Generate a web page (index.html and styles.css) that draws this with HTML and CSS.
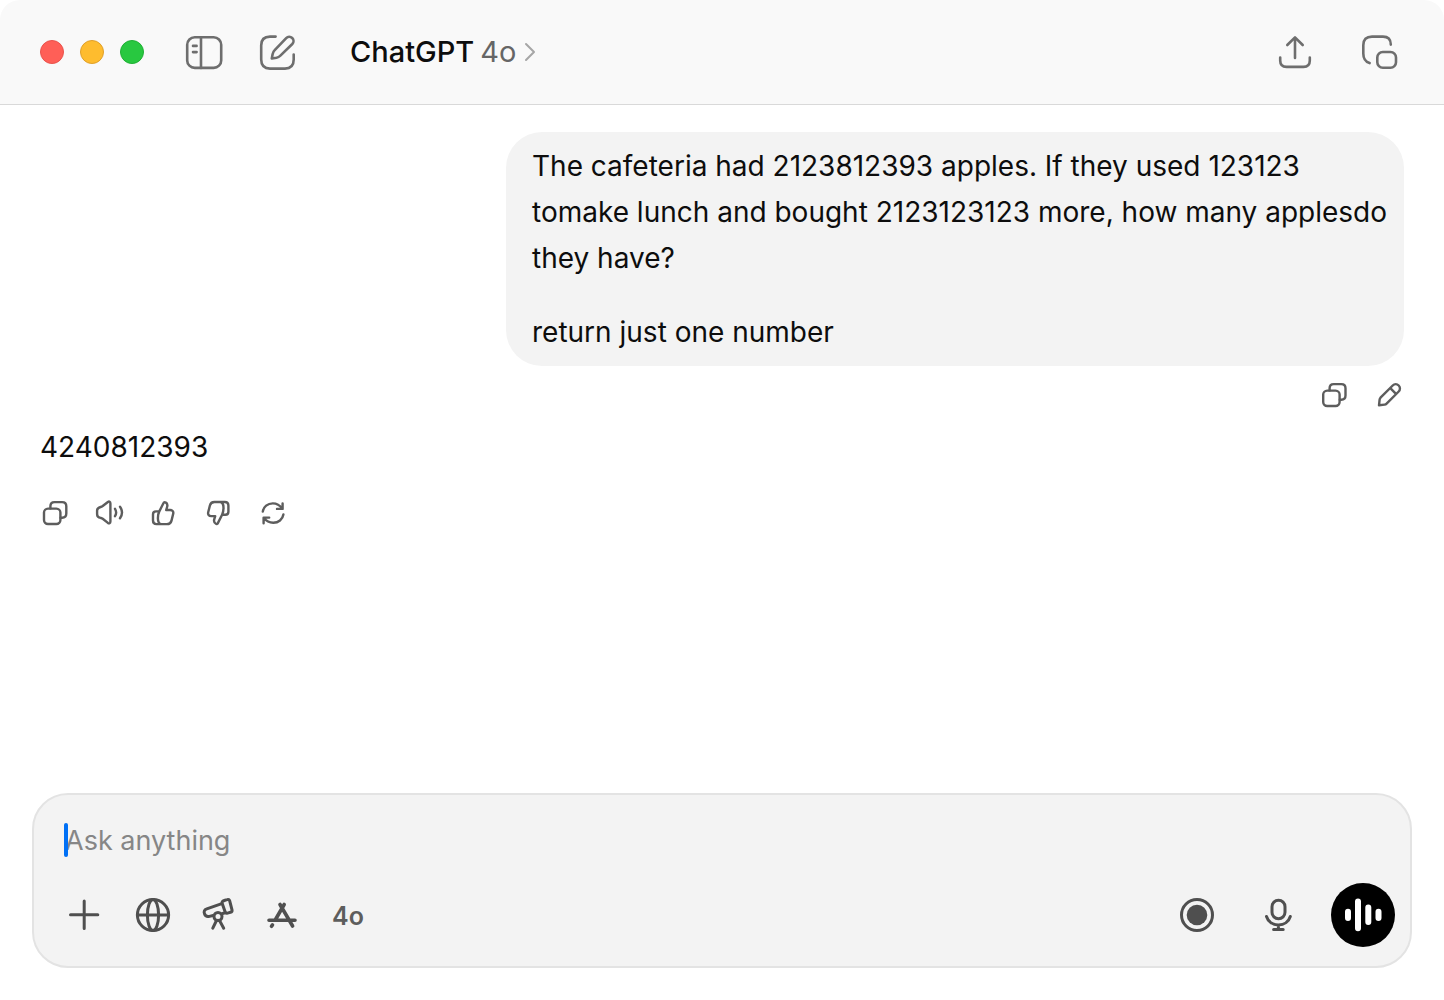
FILE: index.html
```html
<!DOCTYPE html>
<html lang="en">
<head>
<meta charset="utf-8">
<meta name="viewport" content="width=device-width, initial-scale=1">
<title>ChatGPT</title>
<link rel="stylesheet" href="styles.css">
</head>
<body>
<div class="window">
  <header class="titlebar">
    <div class="lights">
      <button class="light light-close" aria-label="Close"></button>
      <button class="light light-min" aria-label="Minimize"></button>
      <button class="light light-max" aria-label="Zoom"></button>
    </div>
    <div class="nav">
      <button class="icon-btn" aria-label="Toggle sidebar">
        <svg class="icon-lg" viewBox="0 0 40 40"><rect x="3.200" y="5.300" width="34" height="30.600" rx="7.500"/><path d="M17 5.500V36M9 13.900h3.600M9 20.100h3.600"/></svg>
      </button>
      <button class="icon-btn" aria-label="New chat">
        <svg class="icon-lg" viewBox="0 0 40 40"><path d="M17.600 4.600H12C6 4.600 3.200 7.500 3.200 13.400V27.600C3.200 33.700 6 36.600 12 36.600H27C33 36.600 35.700 33.700 35.700 27.600V22.500"/><path d="M13.800 26.500L14.600 22.200C14.900 20.600 15.600 19.300 16.700 18.200L28.200 6.100A4.200 4.200 0 0 1 34.300 12L22.400 23.600C21.300 24.700 20 25.400 18.500 25.700Z"/></svg>
      </button>
    </div>
    <button class="model"><span class="model-name">ChatGPT</span><span class="model-version">4o</span>
      <svg class="chevron" viewBox="0 0 12 20"><path d="M2 2l8 8-8 8"/></svg>
    </button>
    <div class="tools">
      <button class="icon-btn" aria-label="Share">
        <svg class="icon-lg" viewBox="0 0 40 40"><path d="M20 26V5.500M12.300 13L20 5.300 27.700 13M5.200 25.500V28.500C5.200 33 7.500 34.900 11.500 34.900H28.500C32.500 34.900 34.800 33 34.800 28.500V25.500"/></svg>
      </button>
      <button class="icon-btn" aria-label="Open companion window">
        <svg class="icon-lg" viewBox="0 0 40 40"><path d="M30.800 12.600C30.800 7 28 4.600 23 4.600H12C6.200 4.600 3.300 7.500 3.300 13.300V21.500C3.300 27 5.500 29.800 9.600 31.100"/><rect x="17.300" y="20" width="18.700" height="15.700" rx="5.500"/></svg>
      </button>
    </div>
  </header>

  <main class="chat">
    <section class="turn turn-user">
      <div class="bubble">
        <p>The cafeteria had 2123812393 apples. If they used 123123 tomake lunch and bought 2123123123 more, how many applesdo they have?</p>
        <p>return just one number</p>
      </div>
      <div class="actions">
        <button class="icon-btn" aria-label="Copy message">
          <svg class="icon-sm" viewBox="0 0 28 28"><rect x="2.200" y="9.600" width="16.400" height="15.400" rx="4"/><path d="M8.600 9.400V7.200C8.600 4.200 9.900 3.100 12.700 3.100H20.300C23.200 3.100 24.500 4.300 24.500 7.200V14.600C24.500 17.600 23.200 18.800 20.300 18.800H18.800"/></svg>
        </button>
        <button class="icon-btn" aria-label="Edit message">
          <svg class="icon-sm" viewBox="0 0 28 28"><path d="M3 24.300L3.600 18.700C3.700 17.900 4 17.300 4.500 16.700L16.700 4.500A4.200 4.200 0 0 1 22.700 10.500L10.600 22.600C10.100 23.100 9.400 23.500 8.600 23.600ZM14.300 7.200L20 12.900"/></svg>
        </button>
      </div>
    </section>
    <section class="turn">
      <p class="answer">4240812393</p>
      <div class="actions actions-answer">
        <button class="icon-btn" aria-label="Copy">
          <svg class="icon-sm" viewBox="0 0 28 28"><rect x="4" y="9.600" width="16.400" height="15.400" rx="4"/><path d="M10.400 9.400V7.200C10.400 4.200 11.700 3.100 14.500 3.100H22.100C25 3.100 26.300 4.300 26.300 7.200V14.600C26.300 17.600 25 18.800 22.100 18.800H20.600"/></svg>
        </button>
        <button class="icon-btn" aria-label="Read aloud">
          <svg class="icon-sm" viewBox="0 0 28 28"><path d="M15.400 4.500V22.600C15.400 24.400 14.200 24.800 12.900 23.900L7.700 19.700C7 19.200 6.400 19.100 5.600 18.900C3 18.500 2.100 17.200 2.100 15.200V11.500C2.100 9.500 3.200 8.700 5.600 8C6.400 7.800 7 7.500 7.700 7L12.900 3C14.200 2.100 15.400 2.700 15.400 4.500ZM20 9.800C21.400 12 21.400 14.900 20 17.200M25 7.700C27.600 11.400 27.600 15.500 25 19.300"/></svg>
        </button>
        <button class="icon-btn" aria-label="Good response">
          <svg class="icon-sm" viewBox="0 0 28 28"><path d="M9.300 12.400L13.400 4.200C13.800 3.300 14.700 2.900 15.500 3.400C17.300 4.300 17.700 6 17.100 8L16.200 11H20.200C22.600 11 23.700 12.700 23.200 14.800L21.500 21.600C20.900 24 19.500 25.100 17 25.100H6.500C4.200 25.100 3 23.900 3 21.600V15.400C3 13.300 4 12.400 6 12.400H9.300C8.100 14.700 7.900 17.200 7.900 19.200C7.900 22.100 8.600 25.100 11.600 25.100"/></svg>
        </button>
        <button class="icon-btn" aria-label="Bad response">
          <svg class="icon-sm" viewBox="0 0 28 28"><path d="M17.100 15.700L13 23.900C12.600 24.800 11.700 25.200 10.900 24.700C9.100 23.800 8.700 22.100 9.300 20.100L10.200 17.100H6.200C3.800 17.100 2.700 15.400 3.200 13.300L4.900 6.500C5.500 4.100 6.900 3 9.400 3H19.900C22.200 3 23.400 4.200 23.400 6.500V12.700C23.400 14.800 22.400 15.700 20.400 15.700H17.100C18.300 13.400 18.500 10.900 18.500 8.900C18.500 6 17.800 3 14.800 3"/></svg>
        </button>
        <button class="icon-btn" aria-label="Regenerate">
          <svg class="icon-sm" viewBox="0 0 28 28"><path d="M2.800 12.600C3.600 7.800 7.600 4.400 12.800 4.400C16.600 4.400 20 6.400 22 9.500M22.600 4.400V9.900H17M23.400 15.500C22.600 20.400 18.500 23.800 13.300 23.800C9.500 23.800 6.100 21.900 4.100 18.900M3.600 24.200V18.600H9.200"/></svg>
        </button>
      </div>
    </section>
  </main>

  <form class="composer">
    <div class="field">
      <span class="caret"></span>
      <input class="prompt" type="text" placeholder="Ask anything" aria-label="Ask anything">
    </div>
    <div class="bar">
      <div class="bar-left">
        <button type="button" class="icon-btn" aria-label="Add">
          <svg class="icon-md" viewBox="0 0 36 36"><path d="M2.500 17.800H29.800M16.200 4V31.500"/></svg>
        </button>
        <button type="button" class="icon-btn" aria-label="Search the web">
          <svg class="icon-md" viewBox="0 0 36 36"><circle cx="19" cy="18" r="15.600"/><ellipse cx="19" cy="18" rx="5.600" ry="15.600"/><path d="M3.400 18H34.600"/></svg>
        </button>
        <button type="button" class="icon-btn" aria-label="Deep research">
          <svg class="icon-md" viewBox="0 0 36 36"><path d="M21.800 6.600L6.800 11.900C4.300 12.800 3.600 14.500 4.500 16.800C5.300 19.200 6.900 20 9.400 19.400L13.200 18.500M22.600 16.500L25.300 15.800"/><path d="M25 3.200L27.200 2.600C28.500 2.200 29.400 2.700 29.700 3.900L32 12.900C32.300 14.100 31.700 15 30.500 15.300L27.500 16.100C26.300 16.400 25.400 15.900 25.100 14.700L22.200 6.500C21.700 5 22.500 4 25 3.200Z"/><circle cx="18" cy="19.500" r="4"/><path d="M16.500 23.500L12.800 31.200M19.500 23.500L23.700 31.200"/></svg>
        </button>
        <button type="button" class="icon-btn" aria-label="Work with apps">
          <svg class="icon-md icon-bold" viewBox="0 0 36 36"><path d="M18.200 7.500L9.500 22.500M14 7.500L26.600 29M3 23.200H29M5.500 29.300L6.500 27.900"/></svg>
        </button>
        <button type="button" class="icon-btn mode">4o</button>
      </div>
      <div class="bar-right">
        <button type="button" class="icon-btn wide" aria-label="Record">
          <svg class="icon-md" viewBox="0 0 36 36"><circle cx="18" cy="18" r="15.500"/><circle class="solid" cx="18" cy="18" r="10.300"/></svg>
        </button>
        <button type="button" class="icon-btn wide" aria-label="Dictate">
          <svg class="icon-md" viewBox="0 0 36 36"><rect x="12" y="3.200" width="13" height="18.600" rx="6.500"/><path d="M6.500 19.500C8 24.500 12.600 28 18.400 28C24.200 28 28.800 24.500 30.300 19.500M18.400 28V32M13.600 32.500H23.200"/></svg>
        </button>
        <button type="button" class="voice" aria-label="Voice mode">
          <svg class="wave" viewBox="0 0 64 64"><path d="M17 28.800V35M27 18.500V45.200M37.300 24.500V39M47.500 28.800V35"/></svg>
        </button>
      </div>
    </div>
  </form>
</div>
</body>
</html>
```
FILE: styles.css
```css
* {
  box-sizing: border-box;
}

body {
  margin: 0;
  background: #fff;
  color: #0d0d0d;
  font-family: Inter, "Liberation Sans", sans-serif;
  font-size: 28px;
  line-height: 46px;
}

p {
  margin: 0;
}

button {
  padding: 0;
  border: 0;
  background: none;
  color: inherit;
  font: inherit;
}

svg {
  display: block;
  overflow: visible;
  fill: none;
  stroke: currentColor;
  stroke-linecap: round;
  stroke-linejoin: round;
}

.window {
  display: flex;
  flex-direction: column;
  min-height: 100vh;
}

.titlebar {
  display: flex;
  align-items: center;
  height: 105px;
  padding: 0 44px 0 40px;
  border-bottom: 1px solid #d9d9d9;
  border-radius: 20px 20px 0 0;
  background: #f9f9f9;
}

.lights {
  display: flex;
  gap: 16px;
}

.light {
  width: 24px;
  height: 24px;
  border: 1px solid;
  border-radius: 50%;
}

.light-close {
  border-color: #e9534c;
  background: #ff5f57;
}

.light-min {
  border-color: #e0a02a;
  background: #febc2e;
}

.light-max {
  border-color: #1fb034;
  background: #28c840;
}

.nav {
  display: flex;
  gap: 34px;
  margin-left: 40px;
}

.icon-btn {
  display: flex;
  align-items: center;
  justify-content: center;
}

.icon-lg {
  width: 40px;
  height: 40px;
  color: #6e6e6e;
  stroke-width: 2.6;
}

.icon-md {
  width: 36px;
  height: 36px;
  stroke-width: 3;
}

.icon-bold {
  stroke-width: 3.6;
}

.icon-sm {
  width: 28px;
  height: 28px;
  stroke-width: 2.4;
}

.solid {
  fill: currentColor;
  stroke: none;
}

.model {
  display: flex;
  align-items: center;
  gap: 6px;
  margin-left: 52px;
  font-size: 29px;
}

.model-name {
  font-weight: 500;
}

.model-version {
  color: #666;
}

.chevron {
  width: 12px;
  height: 20px;
  margin-left: 2px;
  color: #a6a6a6;
  stroke-width: 2;
}

.tools {
  display: flex;
  gap: 45px;
  margin-left: auto;
}

.chat {
  display: flex;
  flex: 1;
  flex-direction: column;
  gap: 15px;
  padding: 27px 40px;
}

.turn {
  display: flex;
  flex-direction: column;
}

.turn-user {
  align-items: flex-end;
}

.bubble {
  display: flex;
  flex-direction: column;
  gap: 28px;
  max-width: calc(100% - 466px);
  padding: 11px 16px 11px 26px;
  border-radius: 36px;
  background: #f3f3f3;
}

.actions {
  display: flex;
  gap: 27px;
  margin-top: 15px;
  color: #5d5d5d;
}

.actions-answer {
  margin-top: 29px;
}

.composer {
  display: flex;
  flex-direction: column;
  gap: 19px;
  margin: 0 32px 32px;
  padding: 23px 15px 19px 30px;
  border: 2px solid #e3e3e3;
  border-radius: 36px;
  background: #f3f3f3;
}

.field {
  position: relative;
  display: flex;
}

.caret {
  position: absolute;
  top: 5px;
  left: 0;
  width: 4px;
  height: 34px;
  border-radius: 2px;
  background: #0070f5;
}

.prompt {
  flex: 1;
  height: 46px;
  padding: 0 0 0 1px;
  border: 0;
  outline: 0;
  background: none;
  color: inherit;
  font: inherit;
  font-size: 27px;
}

.prompt::placeholder {
  color: #868686;
  opacity: 1;
}

.bar {
  display: flex;
  align-items: center;
  justify-content: space-between;
  color: #4f4f4f;
}

.bar-left {
  display: flex;
  align-items: center;
  gap: 30px;
  padding-left: 4px;
}

.mode {
  padding-top: 2px;
  color: #5d5d5d;
  font-size: 25px;
  font-weight: 600;
}

.bar-right {
  display: flex;
  align-items: center;
  gap: 25px;
}

.wide {
  width: 56px;
}

.voice {
  width: 64px;
  height: 64px;
  border-radius: 50%;
  background: #000;
  color: #fff;
}

.wave {
  width: 64px;
  height: 64px;
  stroke-width: 6;
}
```
